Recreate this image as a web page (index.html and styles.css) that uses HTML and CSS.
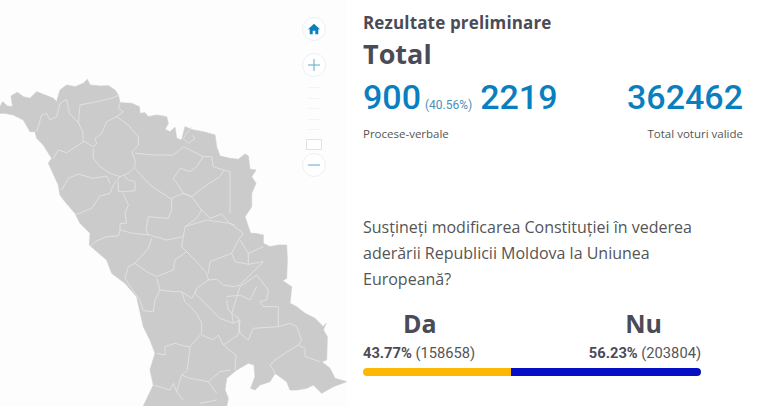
FILE: index.html
```html
<!DOCTYPE html>
<html lang="ro">
<head>
<meta charset="utf-8">
<title>Rezultate preliminare</title>
<link rel="stylesheet" href="styles.css">
</head>
<body>
<main class="page">
  <section class="map-panel">
    <svg class="map" viewBox="0 0 1050 1008" aria-label="Harta Republicii Moldova">
      <path class="land" d="M0 110 8 95 22 108 38 110 33 78 52 67 70 80 90 85 110 65 135 75 160 85 170 95 180 60 200 45 225 50 250 40 262 28 270 45 300 48 325 47 345 60 355 75 360 98 395 100 418 110 420 130 435 128 445 140 470 135 500 140 505 160 495 178 510 185 525 172 530 205 545 210 555 170 580 180 610 185 645 195 650 230 660 258 690 265 715 268 735 252 745 258 750 298 768 300 755 320 768 340 755 370 755 410 735 440 745 470 752 490 765 490 790 495 790 520 810 530 835 525 860 525 862 570 860 625 848 632 875 650 870 700 890 710 915 730 945 745 970 770 978 760 970 780 982 800 980 870 965 875 990 895 1005 925 1040 935 1000 950 965 970 940 945 920 955 890 960 870 960 860 935 825 910 810 935 780 945 765 960 752 955 765 920 762 885 745 880 710 900 680 925 675 960 685 985 680 1008 430 1008 460 945 450 900 465 850 450 810 430 770 420 725 410 680 375 640 335 610 320 570 285 540 268 525 270 490 240 460 225 430 195 395 180 375 175 345 150 290 145 280 155 265 130 225 110 205 105 185 90 185 70 150 40 135 15 130 0 130Z"/>
      <path class="borders" d="M110 185 125 135 140 130 150 150 170 140 180 100 200 88 208 130 235 158 248 185 250 215 220 235 200 248 175 240 160 265M235 158 240 105 290 95 335 85 358 75M360 100 355 115 370 125 350 140 320 155 305 190 285 205 290 222 280 230 255 215 250 215M350 140 385 165 415 200 415 225 395 245 405 270 405 290 385 310 360 320 330 310 300 290 280 265 280 235M405 250 460 255 520 255 550 230 570 240 610 260M575 170 550 205 565 220 585 205 575 195M405 295 450 345 510 385 515 385 515 420 505 445 445 440 438 480 445 495M610 260 635 260 640 290 670 300 690 305 690 430M610 260 590 290 570 305 540 295 520 325 535 345 550 370 575 380 620 345 660 320 672 300M515 385 550 370 575 380 605 420 630 445 665 432 690 460 705 465M605 420 590 445 555 470 550 500 500 510 450 495 400 490 360 480 355 498 320 500 285 515 270 530M360 320 340 345 330 370 300 378 275 415 225 435M185 360 205 325 235 312 280 325 320 318 330 340M355 335 355 365 370 365 405 362 405 335 385 330 370 315M370 370 385 405 375 430 380 460 360 460 360 480M550 500 545 530 560 545M555 470 620 450 690 460 730 490 715 510 695 550 630 575 625 610M455 505 445 535 405 580 440 605 470 620 520 600 525 570 560 545 590 575 620 610 625 630 590 655 585 670 640 725 660 745 700 760 695 730 720 650M405 580 385 590 375 625 405 670 420 690 430 722 460 725 465 690 480 660 470 625M480 660 520 665 545 665 575 685 590 660M545 665 555 695 590 730 605 760 605 790 570 830 560 830 525 820 495 830 495 855 470 850M605 795 640 810 655 795 670 825 715 795 720 750 700 760M570 830 562 900 545 915 570 925 625 935 650 970M670 825 700 850 708 855 705 900M625 935 660 905 690 900M545 915 530 965 550 990M460 945 510 960 520 940 530 965M695 550 705 575 745 583 790 575M745 583 745 550 720 510M745 550 790 530M625 630 650 628 670 645 700 650 720 645 790 575M720 650 770 615 805 660 800 690 780 695 790 710 835 710 835 770 760 775 745 810 720 790M680 680 720 675 750 690 770 650M680 690 685 720 715 745 720 790M835 770 870 760 890 770 905 810 895 825 870 840 825 870 810 885 825 910M895 825 915 835 915 860 960 875M600 1000 650 990"/>
    </svg>
    <div class="zoom-controls">
      <button class="round-btn home" aria-label="Acasă">
        <svg viewBox="0 0 12 12" width="12" height="12"><path d="M6 .8 0 6.2h1.7V11.2h3V7.8h2.6v3.4h3V6.2H12Z"/></svg>
      </button>
      <button class="round-btn" aria-label="Mărește">
        <svg viewBox="0 0 12 12" width="12" height="12"><path class="sign" d="M6 0v12M0 6h12"/></svg>
      </button>
      <div class="ticks">
        <span class="tick"></span><span class="tick"></span><span class="tick"></span><span class="tick"></span><span class="tick"></span>
      </div>
      <div class="slider-handle"></div>
      <button class="round-btn minus" aria-label="Micșorează">
        <svg viewBox="0 0 12 12" width="12" height="12"><path class="sign" d="M0 6h12"/></svg>
      </button>
    </div>
  </section>
  <section class="results">
    <h2 class="subtitle">Rezultate preliminare</h2>
    <h1 class="title">Total</h1>
    <div class="stats">
      <div class="stat">
        <div class="nums"><span class="big">900</span><span class="pct">(40.56%)</span><span class="big">2219</span></div>
        <div class="label">Procese-verbale</div>
      </div>
      <div class="stat right">
        <div class="nums"><span class="big">362462</span></div>
        <div class="label">Total voturi valide</div>
      </div>
    </div>
    <p class="question">Susțineți modificarea Constituției în vederea aderării Republicii Moldova la Uniunea Europeană?</p>
    <div class="vote">
      <div class="options">
        <div class="option">
          <div class="name name-da">Da</div>
          <div class="count"><b>43.77%</b> (158658)</div>
        </div>
        <div class="option right">
          <div class="name name-nu">Nu</div>
          <div class="count"><b>56.23%</b> (203804)</div>
        </div>
      </div>
      <div class="bar">
        <div class="bar-da" style="width:43.77%"></div>
        <div class="bar-nu"></div>
      </div>
    </div>
  </section>
</main>
</body>
</html>
```
FILE: styles.css
```css
* { box-sizing: border-box; }
html, body { margin: 0; padding: 0; background: #fff; }
.page { display: flex; width: 768px; height: 406px; overflow: hidden; font-family: "Open Sans", sans-serif; color: #4b4b57; }
.map-panel { position: relative; flex: 0 0 347px; height: 406px; background: #fdfdfd; overflow: hidden; }
.map { position: absolute; left: 0; top: 70px; width: 350px; height: 336px; filter: blur(.35px); }
.land { fill: #cbcbcb; stroke: #cbcbcb; stroke-width: 2; stroke-linejoin: round; }
.borders { fill: none; stroke: #e6e6e6; stroke-width: 2.4; stroke-linejoin: round; }
.zoom-controls { position: absolute; left: 302px; top: 17px; width: 24px; display: flex; flex-direction: column; align-items: center; }
.round-btn { width: 24px; height: 24px; padding: 0; border: 1px solid #e9f0f3; border-radius: 50%; background: #fff; display: flex; align-items: center; justify-content: center; }
.home { margin-bottom: 12px; }
.home path { fill: #0a7fc0; }
.sign { fill: none; stroke: #5aa9c9; stroke-width: 1; }
.ticks { display: flex; flex-direction: column; gap: 9.5px; margin-top: 10px; }
.tick { display: block; width: 13px; height: 1px; background: #f4f4f4; }
.slider-handle { width: 16px; height: 11px; border: 1px solid #e2e2e2; background: #fff; margin-top: 9px; }
.minus { margin-top: 3px; }
.results { flex: 1; padding: 12px 25px 0 16px; }
.subtitle { margin: 0; font-size: 17px; line-height: 22px; font-weight: 700; letter-spacing: .15px; color: #4b4b57; }
.title { margin: 0; font-size: 27px; line-height: 40px; font-weight: 700; color: #4b4b57; }
.stats { display: flex; justify-content: space-between; margin-top: 1px; }
.nums { display: flex; align-items: baseline; height: 44px; line-height: 44px; }
.big { font-family: Roboto, sans-serif; font-size: 34px; font-weight: 500; color: #0a7fc0; }
.pct { font-family: Roboto, sans-serif; font-size: 12px; color: #4a90b8; margin: 0 8px 0 4px; }
.label { font-size: 11.5px; line-height: 16px; margin-top: 7px; color: #555; }
.right { text-align: right; }
.right .nums { justify-content: flex-end; }
.question { margin: 72px 0 0; width: 345px; font-size: 16px; line-height: 26px; color: #555; }
.vote { width: 338px; margin-top: 15px; }
.options { display: flex; justify-content: space-between; }
.name { font-size: 25px; line-height: 32px; font-weight: 700; color: #4b4b57; }
.name-da { padding-left: 40px; }
.name-nu { padding-right: 39px; }
.count { font-family: Roboto, sans-serif; font-size: 14.7px; line-height: 18px; margin-top: 5px; color: #555; }
.count b { color: #4b4b57; }
.bar { display: flex; height: 8px; margin-top: 6px; border-radius: 4px; overflow: hidden; }
.bar-da { background: #fdb705; }
.bar-nu { flex: 1; background: #0510c4; }
```
